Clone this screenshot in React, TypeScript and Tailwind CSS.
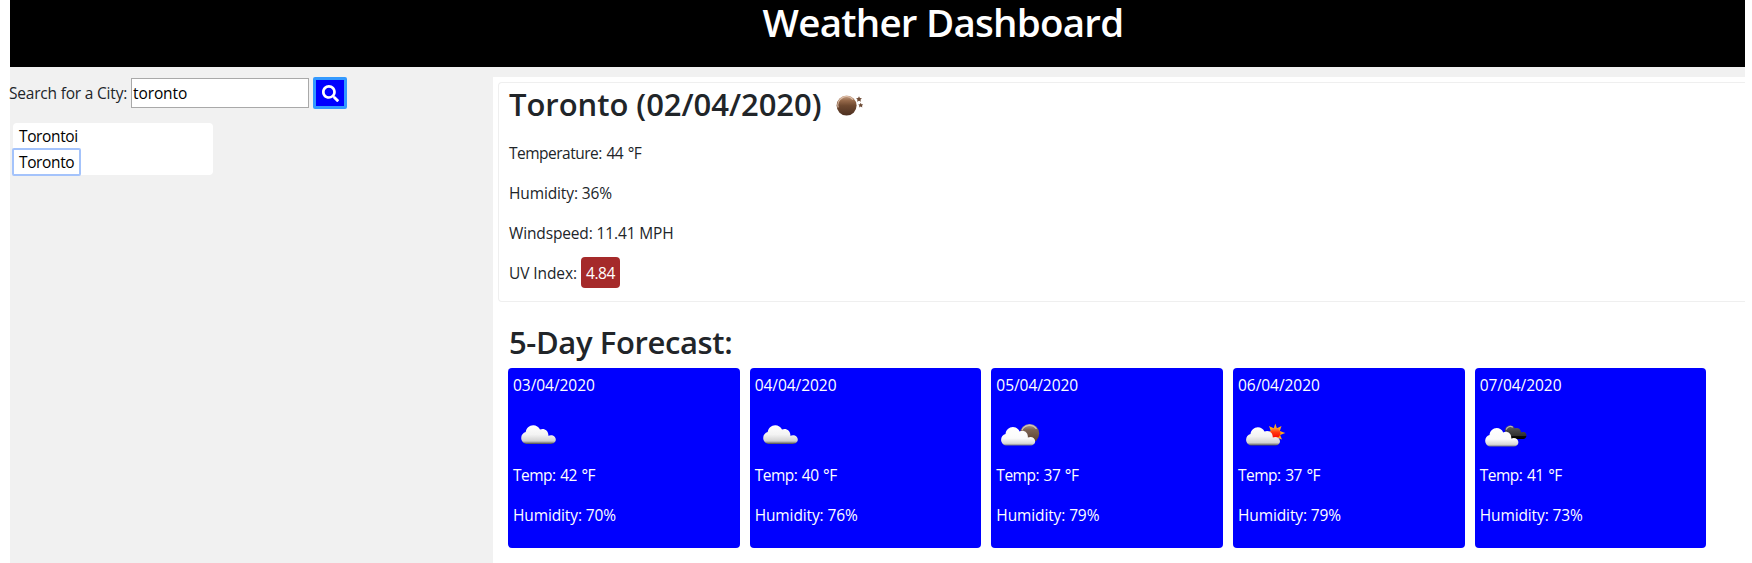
import { FaSearch } from "react-icons/fa";

type Kind = "cloud" | "cloudMoon" | "cloudSun" | "brokenClouds";

const CLOUD =
  "M6.4 19C2.900 19 .2 16.300 .2 13c0-2.900 1.900-5.200 4.500-5.900C5.100 3.200 8.300.2 12.200.2c3 0 5.600 1.800 6.800 4.400.8-.4 1.700-.6 2.600-.6 3 0 5.400 2.300 5.700 5.200.1.500.1 1.100 0 1.600.8-.4 1.800-.6 2.700-.6 2.700 0 4.800 2 4.800 4.400S32.700 19 30 19z";

const forecast: { date: string; kind: Kind; temp: number; humidity: number }[] = [
  { date: "03/04/2020", kind: "cloud", temp: 42, humidity: 70 },
  { date: "04/04/2020", kind: "cloud", temp: 40, humidity: 76 },
  { date: "05/04/2020", kind: "cloudMoon", temp: 37, humidity: 79 },
  { date: "06/04/2020", kind: "cloudSun", temp: 37, humidity: 79 },
  { date: "07/04/2020", kind: "brokenClouds", temp: 41, humidity: 73 },
];

function Gradients() {
  return (
    <svg width="0" height="0" className="absolute" aria-hidden="true">
      <defs>
        <linearGradient id="cloudFill" x1="0" y1="0" x2="0" y2="1">
          <stop offset="0" stopColor="#ffffff" />
          <stop offset="0.5" stopColor="#f3f3f3" />
          <stop offset="0.84" stopColor="#d2d2d2" />
          <stop offset="0.93" stopColor="#8a8a8a" />
          <stop offset="1" stopColor="#4a4a4a" />
        </linearGradient>
        <linearGradient id="whiteCloudFill" x1="0" y1="0" x2="0" y2="1">
          <stop offset="0" stopColor="#ffffff" />
          <stop offset="0.6" stopColor="#fbfbfb" />
          <stop offset="0.88" stopColor="#d8d8d8" />
          <stop offset="1" stopColor="#77777f" />
        </linearGradient>
        <linearGradient id="darkCloudFill" x1="0" y1="0" x2="0" y2="1">
          <stop offset="0" stopColor="#6a6a6a" />
          <stop offset="0.4" stopColor="#444444" />
          <stop offset="0.75" stopColor="#303030" />
          <stop offset="0.8" stopColor="#0a0a0a" />
          <stop offset="1" stopColor="#000000" />
        </linearGradient>
        <linearGradient id="moonFill" x1="0" y1="0" x2="0" y2="1">
          <stop offset="0" stopColor="#c9a58c" />
          <stop offset="0.25" stopColor="#96694a" />
          <stop offset="0.5" stopColor="#6f4930" />
          <stop offset="1" stopColor="#4c2f20" />
        </linearGradient>
        <linearGradient id="dimMoonFill" x1="0" y1="0" x2="0" y2="1">
          <stop offset="0" stopColor="#b7a79c" />
          <stop offset="0.3" stopColor="#7d6453" />
          <stop offset="1" stopColor="#553c2e" />
        </linearGradient>
        <linearGradient id="sunFill" x1="0" y1="0" x2="0" y2="1">
          <stop offset="0" stopColor="#ff9a3c" />
          <stop offset="0.4" stopColor="#ff3a10" />
          <stop offset="1" stopColor="#fa0000" />
        </linearGradient>
      </defs>
    </svg>
  );
}

function MoonIcon() {
  return (
    <svg width="34" height="26" viewBox="0 0 34 26" className="mt-[7px]">
      <circle cx="12.600" cy="13.600" r="10" fill="url(#moonFill)" />
      <path d="M4.200 15.500A8.600 8.600 0 0 1 19 7.600" fill="none" stroke="#e9cdb9" strokeWidth="1.300" opacity="0.8" />
      <path d="M25 4.300l.9 1.800 2 .2-1.400 1.400.4 2-1.900-.9-1.900.9.4-2-1.400-1.400 2-.2z" fill="#6d4a35" />
      <path d="M26.700 10.700l.8 1.600 1.700.2-1.200 1.200.3 1.700-1.600-.8-1.600.8.3-1.700-1.200-1.200 1.700-.2z" fill="#6d4a35" />
    </svg>
  );
}

function WeatherIcon({ kind }: { kind: Kind }) {
  return (
    <svg width="50" height="50" viewBox="0 0 50 50" className="my-2 block">
      {kind === "cloud" && (
        <g transform="translate(8 20)">
          <path d={CLOUD} fill="url(#cloudFill)" />
        </g>
      )}
      {kind === "cloudMoon" && (
        <>
          <circle cx="33.600" cy="28.600" r="9.600" fill="url(#dimMoonFill)" />
          <path d="M26 25a8.400 8.400 0 0 1 14.500-1" fill="none" stroke="#cfc3ba" strokeWidth="1.200" />
          <g transform="translate(4.900 21.900) scale(0.985)">
            <path d={CLOUD} fill="url(#whiteCloudFill)" />
          </g>
        </>
      )}
      {kind === "cloudSun" && (
        <>
          <path
            d="M37.300 18.600L38.900 23.300L43.500 21.100L41.800 25.900L47.300 28L42.100 30L44 34.500L39.500 33L37.300 37.500L35 33L30.500 34.500L32.500 30L27.500 28L32.800 25.900L31 20.900L35.800 23.300Z"
            fill="#fba81e"
          />
          <circle cx="37.300" cy="28.100" r="5.200" fill="url(#sunFill)" />
          <g transform="translate(7.900 22) scale(0.98)">
            <path d={CLOUD} fill="url(#cloudFill)" />
          </g>
        </>
      )}
      {kind === "brokenClouds" && (
        <>
          <path
            d="M25 26c0-3.200 2.200-5.500 5-5.500 2.200 0 4 1.200 4.800 3 .6-.3 1.200-.4 1.900-.4 2.200 0 4 1.500 4.200 3.600.4 0 .6.300.6.900.6-.4 1.300-.5 2-.5 1.700 0 3 1.300 3 3.200S45.200 34 43.500 34H28z"
            fill="url(#darkCloudFill)"
          />
          <path d="M26.200 24.600a4.400 4.400 0 0 1 6.600-2.400" fill="none" stroke="#b5b5b5" strokeWidth="1.200" />
          <g transform="translate(5 22.900) scale(0.96 0.985)">
            <path d={CLOUD} fill="url(#whiteCloudFill)" />
          </g>
        </>
      )}
    </svg>
  );
}

export default function App() {
  return (
    <div className="h-[563px] w-[1752px] overflow-hidden bg-white pl-[10px] font-['Open_Sans','Noto_Sans',sans-serif] text-[15.5px] leading-6 text-[#212529]">
      <Gradients />
      <div className="flex h-full w-[1735px] flex-col bg-[#f1f1f1]">
        <header className="h-[67px] shrink-0 bg-black pl-[131px] text-center text-white">
          <h1 className="text-[38.5px] leading-[44px] font-semibold tracking-[-0.75px]">Weather Dashboard</h1>
        </header>

        <div className="flex min-h-0 flex-1">
          <aside className="w-[483px] shrink-0 pt-[10px]">
            <form className="-ml-px flex items-center" onSubmit={(e) => e.preventDefault()}>
              <label htmlFor="city" className="w-[122px] tracking-[-0.2px] whitespace-nowrap">
                Search for a City:
              </label>
              <input
                id="city"
                defaultValue="toronto"
                className="h-[30px] w-[178px] border border-[#a9a9a9] bg-white px-px tracking-[-0.1px] text-black outline-none"
              />
              <button
                type="submit"
                aria-label="Search"
                className="ml-1 flex h-8 w-[34px] items-center justify-center rounded-[2px] border-[3px] border-[#3399ff] bg-[#0000ff] text-white"
              >
                <FaSearch size={17} />
              </button>
            </form>
            <ul className="mt-[14px] ml-[3px] h-[52px] w-[200px] rounded-[4px] bg-white text-black">
              <li className="h-[26px] pt-[1px] pl-[6px] tracking-[-0.38px]">Torontoi</li>
              <li className="h-[26px]">
                <button
                  type="button"
                  className="-mt-px -ml-px block h-[28px] w-[69px] rounded-[2px] border-2 border-[#a4c3fb] pl-[5px] text-left leading-6 tracking-[-0.38px]"
                >
                  Toronto
                </button>
              </li>
            </ul>
          </aside>

          <main className="mt-[10px] min-w-0 flex-1 bg-white pt-[5px] pl-[5px]">
            <section className="h-[220px] rounded-l-[4px] border border-r-0 border-[#efefef] pt-[2px] pl-[10px]">
              <div className="flex items-start">
                <h2 className="w-[325px] text-[31px] leading-[38px] font-semibold tracking-[-0.04px] whitespace-nowrap">Toronto (02/04/2020)</h2>
                <MoonIcon />
              </div>
              <p className="mt-[18px] tracking-[-0.5px] [word-spacing:1px]">Temperature: 44 °F</p>
              <p className="mt-4 tracking-[-0.12px]">Humidity: 36%</p>
              <p className="mt-4 tracking-[-0.14px]">Windspeed: 11.41 MPH</p>
              <p className="mt-4 flex items-center">
                <span className="w-[72px] tracking-[-0.1px]">UV Index:</span>
                <span className="-mt-[5px] -mb-1 h-[31px] w-[39px] rounded-[4px] bg-[#a52a2a] text-center leading-[33px] tracking-[-0.4px] text-white">
                  4.84
                </span>
              </p>
            </section>

            <h2 className="mt-[21px] pl-[11px] text-[31px] leading-[38px] font-semibold tracking-[-0.38px]">5-Day Forecast:</h2>
            <div className="mt-[7px] ml-[10px] grid w-[1198.4px] grid-cols-5 gap-[10px]">
              {forecast.map((day) => (
                <article key={day.date} className="h-[180px] rounded-[4px] bg-[#0000ff] pt-[5px] pl-[5px] text-white">
                  <p className="tracking-[-0.05px]">{day.date}</p>
                  <WeatherIcon kind={day.kind} />
                  <p className="tracking-[-0.5px] [word-spacing:1px]">Temp: {day.temp} °F</p>
                  <p className="mt-4 tracking-[-0.12px]">Humidity: {day.humidity}%</p>
                </article>
              ))}
            </div>
          </main>
        </div>
      </div>
    </div>
  );
}
